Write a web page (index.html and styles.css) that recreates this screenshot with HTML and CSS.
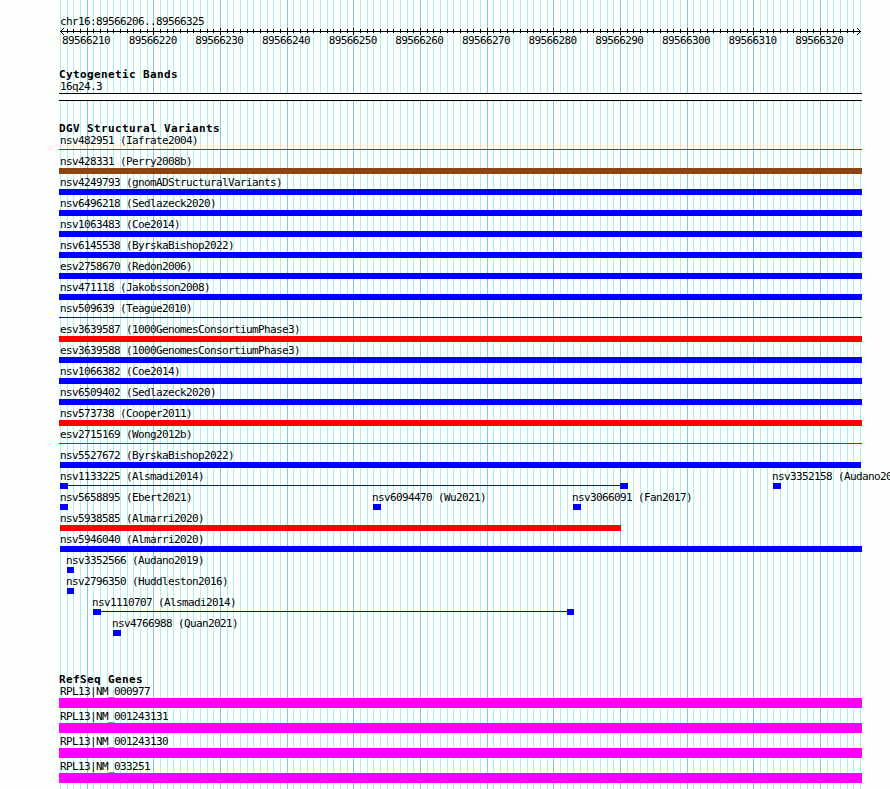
FILE: index.html
```
<!DOCTYPE html>
<html lang="en">
<head>
  <meta charset="UTF-8">
  <title>chr16:89566206..89566325</title>
  <link rel="stylesheet" href="styles.css">
</head>
<body>
  <div class="browser">
    <div class="region">chr16:89566206..89566325</div>
    <svg class="ruler" width="803" height="7" shape-rendering="crispEdges">
      <rect x="1" y="3" width="801" height="1"/>
      <path d="M4 0h1v1h-1zM3 1h1v1h-1zM2 2h1v1h-1zM2 4h1v1h-1zM3 5h1v1h-1zM4 6h1v1h-1z"/>
      <path d="M798 0h1v1h-1zM799 1h1v1h-1zM800 2h1v1h-1zM800 4h1v1h-1zM799 5h1v1h-1zM798 6h1v1h-1z"/>
      <g id="ticks"></g>
    </svg>
    <div class="scale" id="scale"></div>

    <section class="bands">
      <h2>Cytogenetic Bands</h2>
      <div class="label">16q24.3</div>
      <div class="band"></div>
    </section>

    <section class="variants">
      <h2>DGV Structural Variants</h2>
      <div id="variants"></div>
    </section>

    <section class="genes">
      <h2>RefSeq Genes</h2>
      <div id="genes"></div>
    </section>
  </div>
  <script src="script.js"></script>
</body>
</html>
```

FILE: styles.css
```
body {
  margin: 0;
  background-color: #fdfffc;
  color: #000;
  font-family: "DejaVu Sans Mono", "Liberation Mono", monospace;
  font-size: 11px;
  line-height: 12px;
  letter-spacing: -0.62px;
  height: 789px;
  overflow: hidden;
}
.browser {
  box-sizing: border-box;
  width: 803px;
  height: 789px;
  margin-left: 59px;
  padding-top: 15px;
  white-space: nowrap;
  /* major line every 10 bases, minor line every base */
  background-image:
    linear-gradient(90deg, transparent 27px, #82c8eb 27px, #82c8eb 28px, transparent 28px, transparent 93px, #82c8eb 93px, #82c8eb 94px, transparent 94px, transparent 160px, #82c8eb 160px, #82c8eb 161px, transparent 161px),
    linear-gradient(90deg, #afeeee 1px, transparent 1px, transparent 7px, #afeeee 7px, #afeeee 8px, transparent 8px, transparent 13px, #afeeee 13px, #afeeee 14px, transparent 14px);
  background-size: 200px 100%, 20px 100%;
  background-position: 1px 0, 1px 0;
}
.region {
  padding-left: 1px;
  height: 13px;
  line-height: 14px;
}
.ruler {
  display: block;
}
.scale {
  display: flex;
  height: 34px;
  padding-left: 3px;
}
.scale span {
  flex: none;
  width: 66.6667px;
}
h2 {
  margin: 0;
  font-size: 11px;
  line-height: 12px;
  letter-spacing: 0.38px;
}
.label {
  height: 12px;
  text-indent: 1px;
}
.label.inset {
  text-indent: -1px;
}
.label.flush {
  text-indent: 0;
}
.band {
  height: 6px;
  border-top: 1px solid #000;
  border-bottom: 1px solid #000;
  background-color: #fdfffc;
}
.bands {
  height: 54px;
}
.variants {
  height: 551px;
}
.row {
  display: grid;
  grid-template-columns: 100%;
  height: 21px;
}
.feature {
  grid-area: 1 / 1;
}
.bar {
  display: flex;
  justify-content: space-between;
  height: 6px;
}
.line {
  height: 1px;
  margin-top: 2px;
}
.blue {
  background-color: #00f;
}
.red {
  background-color: #f00;
}
.brown {
  background-color: #8b4513;
}
.pair {
  background: linear-gradient(#00f, #00f) 0 2px / 100% 1px no-repeat;
}
.pair i {
  width: 8px;
  background-color: #00f;
}
.gene {
  height: 25px;
}
.gene .bar {
  height: 10px;
  background-color: #f0f;
}
```

FILE: script.js
```
// [label, style, left, width], several features can share a row
const variants = [
  [["nsv482951 (Iafrate2004)", "line red", 0, 803]],
  [["nsv428331 (Perry2008b)", "bar brown", 0, 803]],
  [["nsv4249793 (gnomADStructuralVariants)", "bar blue", 0, 803]],
  [["nsv6496218 (Sedlazeck2020)", "bar blue", 0, 803]],
  [["nsv1063483 (Coe2014)", "bar blue", 0, 803]],
  [["nsv6145538 (ByrskaBishop2022)", "bar blue", 0, 803]],
  [["esv2758670 (Redon2006)", "bar blue", 0, 803]],
  [["nsv471118 (Jakobsson2008)", "bar blue", 0, 803]],
  [["nsv509639 (Teague2010)", "line blue", 0, 803]],
  [["esv3639587 (1000GenomesConsortiumPhase3)", "bar red", 0, 803]],
  [["esv3639588 (1000GenomesConsortiumPhase3)", "bar blue", 0, 803]],
  [["nsv1066382 (Coe2014)", "bar blue", 0, 803]],
  [["nsv6509402 (Sedlazeck2020)", "bar blue", 0, 803]],
  [["nsv573738 (Cooper2011)", "bar red", 0, 803]],
  [["esv2715169 (Wong2012b)", "line red", 0, 803]],
  [["nsv5527672 (ByrskaBishop2022)", "bar blue", 1, 801]],
  [["nsv1133225 (Alsmadi2014)", "bar pair", 1, 568], ["nsv3352158 (Audano2019)", "bar blue", 714, 8]],
  [["nsv5658895 (Ebert2021)", "bar blue", 1, 8], ["nsv6094470 (Wu2021)", "bar blue", 314, 8], ["nsv3066091 (Fan2017)", "bar blue", 514, 8]],
  [["nsv5938585 (Almarri2020)", "bar red", 1, 561]],
  [["nsv5946040 (Almarri2020)", "bar blue", 1, 802]],
  [["nsv3352566 (Audano2019)", "bar blue", 8, 7]],
  [["nsv2796350 (Huddleston2016)", "bar blue", 8, 7]],
  [["nsv1110707 (Alsmadi2014)", "bar pair", 34, 481, 7]],
  [["nsv4766988 (Quan2021)", "bar blue", 54, 8]]
];

const genes = ["RPL13|NM_000977", "RPL13|NM_001243131", "RPL13|NM_001243130", "RPL13|NM_033251"];

let rows = "";
for (const row of variants) {
  rows += '<div class="row">';
  for (const [label, style, left, width, end = 8] of row) {
    const ends = style === "bar pair" ? `<i></i><i style="width:${end}px"></i>` : "";
    // labels never start left of the first grid line
    const align = left > 1 ? " inset" : left === 1 ? " flush" : "";
    rows += `<div class="feature" style="margin-left:${left}px">
      <div class="label${align}">${label}</div>
      <div class="${style}" style="width:${width}px">${ends}</div>
    </div>`;
  }
  rows += "</div>";
}
document.getElementById("variants").innerHTML = rows;

document.getElementById("genes").innerHTML = genes.map(name =>
  `<div class="gene"><div class="label">${name}</div><div class="bar"></div></div>`
).join("");

let ticks = "";
let scale = "";
for (let i = 1; i < 120; i++) {
  const x = 1 + Math.round(i * 20 / 3);
  const major = i % 10 === 4;
  ticks += `<rect x="${x}" y="${major ? 0 : 1}" width="1" height="${major ? 7 : 4}"/>`;
  if (major) {
    scale += `<span>${89566206 + i}</span>`;
  }
}
document.getElementById("ticks").innerHTML = ticks;
document.getElementById("scale").innerHTML = scale;
```
